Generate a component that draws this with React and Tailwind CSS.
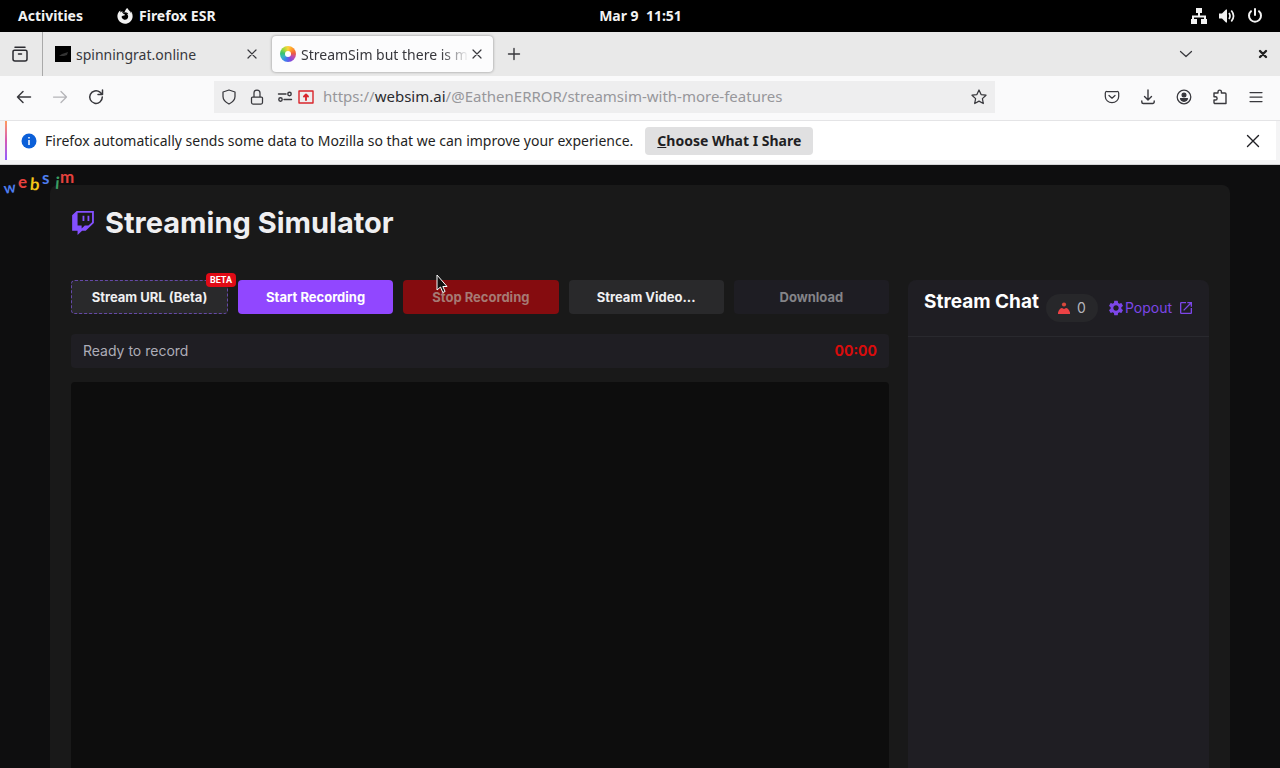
import { FaTwitch, FaFirefoxBrowser } from "react-icons/fa";
import { MdSettings, MdOpenInNew } from "react-icons/md";

const stroke = {
  fill: "none",
  stroke: "currentColor",
  strokeLinecap: "round",
  strokeLinejoin: "round",
  "aria-hidden": true,
};

function Icon({ children, className = "size-4", width = 1.25 }) {
  return (
    <svg viewBox="0 0 16 16" className={className} strokeWidth={width} {...stroke}>
      {children}
    </svg>
  );
}

function SystemBar() {
  return (
    <header className="grid h-8 shrink-0 grid-cols-[1fr_auto_1fr] items-center bg-black pl-[18px] pr-[17px] text-sm font-bold text-[#f2f2f2]">
      <div className="flex items-center gap-[34px]">
        <button>Activities</button>
        <button className="flex items-center gap-[6px]">
          <FaFirefoxBrowser className="size-4" />
          Firefox ESR
        </button>
      </div>
      <button className="whitespace-pre">Mar 9  11:51</button>
      <div className="flex items-center justify-end gap-3">
        <svg viewBox="0 0 16 16" className="size-4" fill="currentColor" aria-hidden="true">
          <path d="M5 0h6v5H9v2.500h6V11h1v5h-6v-5h3V9.500H3V11h3v5H0v-5h1V7.500h6V5H5z" />
        </svg>
        <svg viewBox="0 0 16 16" className="size-4" fill="currentColor" aria-hidden="true">
          <path d="M0 5.500h3L7 1.500h1v13H7l-4-4H0z" />
          <path d="M10 5q2 3 0 6M12.300 2.500q4.500 5.500 0 11" fill="none" stroke="currentColor" strokeWidth="1.700" />
        </svg>
        <svg viewBox="0 0 16 16" className="size-4" fill="none" stroke="currentColor" strokeWidth="2" strokeLinecap="round" aria-hidden="true">
          <path d="M4 3.200a6 6 0 1 0 8 0M8 1v6" />
        </svg>
      </div>
    </header>
  );
}

function TabStrip() {
  return (
    <div className="flex h-11 shrink-0 items-center bg-[#e9e9e9] text-sm text-[#38383d]">
      <button aria-label="Recent browsing" className="flex h-full w-[43px] items-center border-r border-[#a9a9a9] pl-3 text-[#2b2b30]">
        <Icon width={1.5}>
          <path d="M3 1.200h10M2.500 4.200h11A1.500 1.500 0 0 1 15 5.700V13a2 2 0 0 1-2 2H3a2 2 0 0 1-2-2V5.700A1.500 1.500 0 0 1 2.500 4.200zM6.500 8h3" />
        </Icon>
      </button>
      <div className="flex h-9 w-[225px] items-center pl-3 pr-2">
        <svg viewBox="0 0 16 16" className="size-4" aria-hidden="true">
          <path d="M0 0h16v16H0z" fill="#000" />
          <path d="M4 10l3-2 6-2-1 3-3 1z" fill="#333" />
        </svg>
        <span className="flex-1 pl-[5px] pt-px">spinningrat.online</span>
        <button aria-label="Close tab">
          <Icon width={1.200}><path d="M4 4l8 8M12 4l-8 8" /></Icon>
        </button>
      </div>
      <div className="ml-1 flex h-9 w-[221px] items-center rounded bg-[#fcfcfd] pl-2 pr-2 shadow-[0_0_3px_rgba(0,0,0,0.4)]">
        <span className="flex size-4 shrink-0 items-center justify-center rounded-full bg-[conic-gradient(#ffd23b,#ff9a2b,#f0603b,#c04bb0,#7a4be0,#3f7bf0,#39b4c4,#39c46b,#a6d83a,#ffd23b)]">
          <span className="size-[6px] rounded-full bg-white" />
        </span>
        <span className="ml-[5px] w-[166px] overflow-hidden whitespace-nowrap pt-px [mask-image:linear-gradient(to_right,black_140px,transparent_168px)]">
          StreamSim but there is more
        </span>
        <button aria-label="Close tab" className="ml-auto">
          <Icon width={1.200}><path d="M4 4l8 8M12 4l-8 8" /></Icon>
        </button>
      </div>
      <button aria-label="New tab" className="ml-[13px]">
        <Icon width={1.400}><path d="M8 2.500v11M2.500 8h11" /></Icon>
      </button>
      <button aria-label="List all tabs" className="ml-auto mr-[61px]">
        <Icon><path d="M2.500 5.500L8 10.500l5.500-5" /></Icon>
      </button>
      <button aria-label="Close window" className="mr-[9px] text-[#222]">
        <Icon width={2.4}><path d="M5 5l6 6M11 5l-6 6" /></Icon>
      </button>
    </div>
  );
}

function NavBar() {
  return (
    <nav className="flex h-[45px] shrink-0 items-center border-b border-[#e4e4e6] bg-[#fafafb] px-4 pb-[3px] text-sm text-[#38383d]">
      <div className="flex items-center gap-5">
        <button aria-label="Back"><Icon width={1.5}><path d="M14.500 8h-13M7 2.500L1.500 8 7 13.500" /></Icon></button>
        <button aria-label="Forward" className="text-[#b4b4b8]"><Icon><path d="M1.500 8h13M9 2.500L14.500 8 9 13.500" /></Icon></button>
        <button aria-label="Reload"><Icon width={1.5}><path d="M14.300 8A6.300 6.300 0 1 1 12 3.200L14 5M14.500 1v4.500H10" /></Icon></button>
      </div>
      <div className="ml-[110px] flex h-8 w-[781px] items-center bg-[#eeeeef] pl-[7px] pr-2">
        <Icon><path d="M8 1l6 2v4.500c0 3.500-3 6-6 7.500-3-1.500-6-4-6-7.500V3z" /></Icon>
        <Icon className="ml-3 size-4"><path d="M3.500 8h9a1 1 0 0 1 1 1v4.500a1.500 1.500 0 0 1-1.500 1.500H4a1.500 1.500 0 0 1-1.500-1.500V9a1 1 0 0 1 1-1zM5 8V4a3 3 0 0 1 6 0v4" /></Icon>
        <Icon className="ml-3 size-4" width={1.400}><path d="M1.500 5h7.500M7 10.500h7.500" /><circle cx="12.500" cy="5" r="1.700" /><circle cx="3.500" cy="10.500" r="1.700" /></Icon>
        <svg viewBox="0 0 16 14" className="ml-[5px] h-[14px] w-4 text-[#d9262c]" {...stroke} strokeWidth="1.400">
          <path d="M1 1h14v12H1z" />
          <path d="M8 10v-5M6 6.500L8 4.500l2 2" strokeWidth="1.900" />
        </svg>
        <div className="relative ml-[9px] flex-1 whitespace-nowrap text-[15px] text-[#97979b]">
          <input aria-label="Address" className="absolute inset-0 w-full bg-transparent outline-none" />
          https://<span className="text-[#2b2b30]">websim.ai</span>/@EathenERROR/streamsim-with-more-features
        </div>
        <button aria-label="Bookmark this page">
          <Icon><path d="M8 1l2.100 4.600 4.900.600-3.600 3.400.9 4.900L8 12.100l-4.300 2.400.9-4.900L1 6.200l4.900-.6z" /></Icon>
        </button>
      </div>
      <div className="ml-auto flex items-center gap-5">
        <button aria-label="Save to Pocket"><Icon><path d="M3 2.500h10A1.700 1.700 0 0 1 14.700 4v3.500a6.700 6.200 0 0 1-13.400 0V4A1.700 1.700 0 0 1 3 2.500zM5 6.500l3 2.700 3-2.700" /></Icon></button>
        <button aria-label="Downloads"><Icon width={1.400}><path d="M8 1v9.500M4.500 7.500L8 11l3.500-3.500M1.800 12v1A1.500 1.500 0 0 0 3.300 14.500h9.400a1.500 1.500 0 0 0 1.500-1.500v-1" /></Icon></button>
        <button aria-label="Account"><Icon><circle cx="8" cy="8" r="6.800" /><circle cx="8" cy="6" r="1.900" fill="currentColor" /><path d="M4.500 9.700h7c-.5 1.800-1.800 2.600-3.500 2.600s-3-.8-3.500-2.600z" fill="currentColor" /></Icon></button>
        <button aria-label="Extensions"><Icon width={1.400}><path d="M6 4V2.800a1.700 1.700 0 0 1 3.400 0V4H13a1 1 0 0 1 1 1v9.500H3a1 1 0 0 1-1-1V11h1.500a1.600 1.600 0 0 0 0-3.200H2V4z" /></Icon></button>
        <button aria-label="Menu"><Icon><path d="M2 3.500h12M2 8h12M2 12.500h12" /></Icon></button>
      </div>
    </nav>
  );
}

function Notice() {
  return (
    <div className="h-11 shrink-0 border-b border-[#d4d4d6] bg-[#f4f4f5] pb-1 pl-[5px] pr-1 text-sm text-[#1f1f24]">
      <div className="flex h-full items-center bg-white">
        <span className="h-full w-[2px] bg-linear-to-b from-[#ff9a56] via-[#d557b4] to-[#9059ff]" />
        <svg viewBox="0 0 16 16" className="ml-[14px] size-4" aria-hidden="true">
          <circle cx="8" cy="8" r="7.500" fill="#0b5fd8" />
          <path d="M8 7v5M8 4v1.500" stroke="#fff" strokeWidth="1.500" />
        </svg>
        <p className="ml-2">Firefox automatically sends some data to Mozilla so that we can improve your experience.</p>
        <button className="ml-3 h-7 rounded-sm bg-[#e0e0e1] px-3 font-bold"><span className="underline">C</span>hoose What I Share</button>
        <button aria-label="Dismiss" className="ml-auto mr-[15px]">
          <Icon width={1.400}><path d="M2.500 2.500l11 11M13.500 2.500l-11 11" /></Icon>
        </button>
      </div>
    </div>
  );
}

function WebsimBadge() {
  return (
    <svg viewBox="0 0 80 32" className="absolute left-0 top-0 h-8 w-20 font-['Lato',sans-serif] text-[17px] font-bold" role="img" aria-label="websim">
      <text x="4" y="28" fill="#4d7df0" fontSize="15" transform="rotate(-8 10 24)">w</text>
      <text x="18" y="23" fill="#e5413d">e</text>
      <text x="30" y="25" fill="#f5c518" transform="rotate(5 34 20)">b</text>
      <text x="42" y="19" fill="#4d7df0">s</text>
      <text x="55" y="24" fill="#3a9d63" transform="rotate(5 57 20)">i</text>
      <text x="60" y="18" fill="#e5413d">m</text>
    </svg>
  );
}

const actionBase = "h-[34px] rounded pt-[2px] text-[13px] font-bold";

function Simulator() {
  return (
    <main className="relative flex-1 overflow-hidden bg-[#0e0e0f] px-[50px] pt-5 font-['Inter',sans-serif] text-[#efeff1]">
      <WebsimBadge />
      <section className="rounded-lg bg-[#191919] px-[21px] pb-5 pt-[18px]">
        <h1 className="flex h-10 items-center gap-[10px] text-[29px] font-bold">
          <FaTwitch className="size-6 text-[#8450ff]" />
          Streaming Simulator
        </h1>
        <div className="mt-[37px] grid grid-cols-[1fr_301px] gap-[19px]">
          <div>
            <div className="grid grid-cols-[minmax(157px,1fr)_repeat(4,minmax(0,1fr))] gap-[10px]">
              <div className="relative">
                <button className={`${actionBase} w-full border border-dashed border-[#6549a8] bg-[#29292b]`}>Stream URL (Beta)</button>
                <span className="absolute -right-2 -top-[7px] rounded bg-[#e00b16] px-1 font-['Roboto',sans-serif] text-[9px] font-bold leading-[14px] text-white">BETA</span>
              </div>
              <button className={`${actionBase} bg-[#9147ff] text-white`}>Start Recording</button>
              <button disabled className={`${actionBase} bg-[#850c0f] text-[#a67a74]`}>Stop Recording</button>
              <button className={`${actionBase} bg-[#29292b]`}>Stream Video...</button>
              <button disabled className={`${actionBase} bg-[#1e1d23] text-[#848488]`}>Download</button>
            </div>
            <div className="mt-5 flex h-[34px] items-center justify-between rounded bg-[#1f1e23] px-3 text-sm text-[#adadb8]">
              <span>Ready to record</span>
              <time className="font-bold text-[#d90c0c]">00:00</time>
            </div>
            <div className="mt-[14px] h-[600px] rounded bg-[#0d0d0d]" />
          </div>
          <aside className="rounded-lg bg-[#1f1e23]">
            <div className="flex h-[57px] items-center border-b border-[#29292e] pl-4 pr-[15px]">
              <h2 className="self-start pt-2 text-[19px] font-bold text-white">Stream Chat</h2>
              <div className="ml-[7px] flex h-7 items-center gap-[7px] rounded-full bg-[#27272a] px-3 text-sm text-[#b5b5bd]">
                <svg viewBox="0 0 12 12" className="size-3" fill="#ed4245" aria-hidden="true">
                  <circle cx="6" cy="2.500" r="2.100" fill="#d8483c" />
                  <path d="M0 12V10.500Q1.500 6 4 6l2 1 2-1q2.500 0 4 4.500V12z" />
                </svg>
                0
              </div>
              <button aria-label="Chat settings" className="ml-auto text-[#7c46e8]"><MdSettings className="size-[18px]" /></button>
              <a href="#popout" className="flex items-center gap-[6px] text-sm text-[#7c46e8]">Popout <MdOpenInNew className="size-4" /></a>
            </div>
          </aside>
        </div>
      </section>
    </main>
  );
}

export default function App() {
  return (
    <div className="relative flex h-screen flex-col overflow-hidden font-['Noto_Sans',sans-serif]">
      <SystemBar />
      <TabStrip />
      <NavBar />
      <Notice />
      <Simulator />
      <svg viewBox="0 0 12 20" className="absolute left-[436px] top-[274px] h-5 w-3" aria-hidden="true">
        <path d="M1 1v15l3.500-3 2.300 5.500 2.300-1-2.300-5H11z" fill="#111" stroke="#fff" strokeWidth="1" />
      </svg>
    </div>
  );
}
